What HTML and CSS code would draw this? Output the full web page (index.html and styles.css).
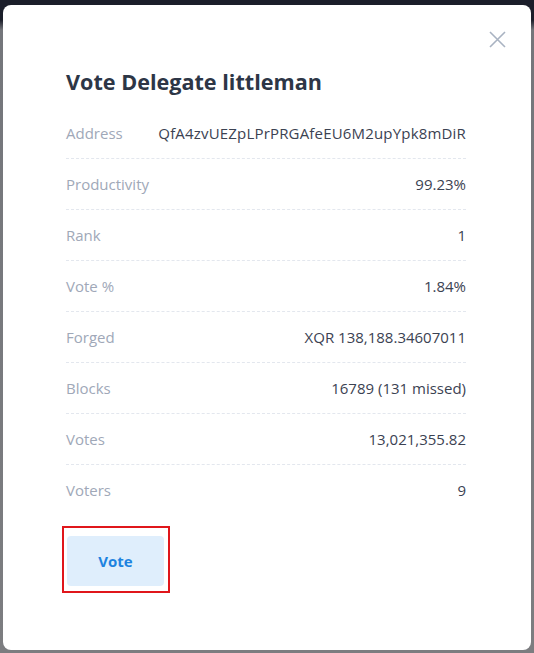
FILE: index.html
```html
<!DOCTYPE html>
<html>
<head>
<meta charset="utf-8">
<link rel="stylesheet" href="styles.css">
</head>
<body>
<div class="modal">
  <button class="close" aria-label="Close">
    <svg width="17" height="17" viewBox="0 0 17 17"><path d="M1 1 L16 16 M16 1 L1 16" stroke="#a9b3c2" stroke-width="1.6" fill="none"/></svg>
  </button>
  <h1 class="title">Vote Delegate littleman</h1>
  <div class="rows">
    <div class="row"><span class="label">Address</span><span class="value address">QfA4zvUEZpLPrPRGAfeEU6M2upYpk8mDiR</span></div>
    <div class="row"><span class="label">Productivity</span><span class="value">99.23%</span></div>
    <div class="row"><span class="label">Rank</span><span class="value">1</span></div>
    <div class="row"><span class="label">Vote %</span><span class="value">1.84%</span></div>
    <div class="row"><span class="label">Forged</span><span class="value">XQR 138,188.34607011</span></div>
    <div class="row"><span class="label">Blocks</span><span class="value">16789 (131 missed)</span></div>
    <div class="row"><span class="label">Votes</span><span class="value">13,021,355.82</span></div>
    <div class="row"><span class="label">Voters</span><span class="value">9</span></div>
  </div>
  <div class="highlight">
    <button class="vote">Vote</button>
  </div>
</div>
</body>
</html>
```
FILE: styles.css
```css
html, body {
  margin: 0;
  height: 100%;
}
body {
  background: linear-gradient(to bottom, #1b1e2a 0, #1b1e2a 20px, #74767b 30px, #7c7d80 100%);
  padding: 5px 0 0 3px;
  box-sizing: border-box;
  font-family: "Open Sans", "Liberation Sans", sans-serif;
}
.modal {
  position: relative;
  width: 528px;
  height: 645px;
  background: #fff;
  border-radius: 8px;
  box-sizing: border-box;
  padding: 62px 65px 0 63px;
}
.close {
  position: absolute;
  top: 26px;
  left: 486px;
  width: 17px;
  height: 17px;
  padding: 0;
  border: 0;
  background: none;
  display: block;
}
.close svg { display: block; }
.title {
  margin: 0 0 11px 0;
  font-size: 21.6px;
  line-height: 30px;
  font-weight: 700;
  color: #2d3646;
}
.rows {
  display: flex;
  flex-direction: column;
}
.row {
  height: 50px;
  display: flex;
  align-items: center;
  justify-content: space-between;
  border-bottom: 1px dashed #e3e7ee;
  font-size: 15px;
}
.row:last-child { border-bottom: 0; }
.label { color: #a0a8b8; }
.value { color: #3b4252; }
.address { letter-spacing: 0.18px; }
.highlight {
  margin-top: 11px;
  margin-left: -4px;
  width: 97px;
  border: 2px solid #e0161b;
  padding: 8px 4px 5px 3px;
  box-sizing: content-box;
}
.vote {
  display: block;
  width: 97px;
  height: 50px;
  border: 0;
  border-radius: 4px;
  background: #dfeefc;
  color: #1d83e0;
  font-family: inherit;
  font-size: 15px;
  font-weight: 700;
  padding: 0;
}
```
